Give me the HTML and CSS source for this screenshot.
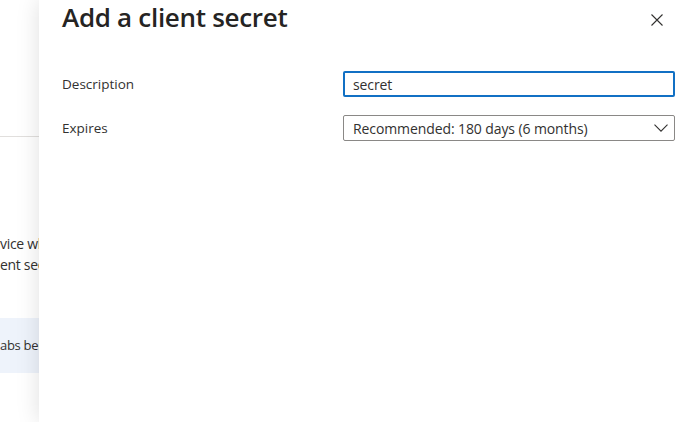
FILE: index.html
```html
<!DOCTYPE html>
<html lang="en">
<head>
<meta charset="utf-8">
<title>Add a client secret</title>
<link rel="stylesheet" href="styles.css">
</head>
<body>
<div class="page">
  <div class="bg">
    <div class="bg-top"></div>
    <div class="bg-rule"></div>
    <div class="bg-text">
      <p class="bg-line">vice when requesting a token. Also can be referred to as application password.</p>
      <p class="bg-line">ent secrets for this application.</p>
    </div>
    <div class="bg-info"><span class="bg-line">abs below to manage your credentials.</span></div>
  </div>

  <aside class="panel" role="dialog" aria-label="Add a client secret">
    <header class="panel-head">
      <h1 class="panel-title">Add a client secret</h1>
      <button class="close" aria-label="Close">
        <svg width="12" height="12" viewBox="0 0 12 12"><path d="M0.5 0.5 L11.5 11.5 M11.5 0.5 L0.5 11.5" stroke="#323130" stroke-width="1.1" fill="none"/></svg>
      </button>
    </header>
    <div class="form">
      <label class="label" for="desc">Description</label>
      <div class="input"><span class="value" id="desc">secret</span></div>
      <span class="label">Expires</span>
      <div class="select">
        <span class="value">Recommended: 180 days (6 months)</span>
        <svg class="chev" width="14" height="8" viewBox="0 0 14 8"><path d="M0.5 0.7 L7 7.2 L13.5 0.7" stroke="#323130" stroke-width="1.1" fill="none"/></svg>
      </div>
    </div>
  </aside>
</div>
</body>
</html>
```
FILE: styles.css
```css
* { box-sizing: border-box; }
html, body { margin: 0; padding: 0; }
body {
  font-family: "Open Sans", "Noto Sans", sans-serif;
  color: #323130;
  background: #fff;
  width: 694px;
  height: 422px;
  overflow: hidden;
}
.page {
  position: relative;
  width: 694px;
  height: 422px;
  overflow: hidden;
}
.bg {
  width: 694px;
  height: 422px;
  display: flex;
  flex-direction: column;
}
.bg-top { height: 136px; }
.bg-rule { height: 1px; background: #e1dfdd; }
.bg-text { margin-top: 96px; }
.bg-line {
  margin: 0;
  font-size: 14px;
  line-height: 21px;
  letter-spacing: -0.3px;
  white-space: nowrap;
  color: #323130;
}
.bg-info {
  margin-top: 43px;
  height: 55px;
  background: #eef3fb;
  display: flex;
  align-items: center;
}
.bg-info .bg-line { font-size: 13px; }

.panel {
  position: absolute;
  left: 39px;
  top: 0;
  width: 655px;
  height: 422px;
  background: #fff;
  box-shadow: 0 0 22px rgba(0, 0, 0, 0.13);
  padding: 0 19px 0 23px;
}
.panel-head {
  display: flex;
  align-items: flex-start;
  justify-content: space-between;
}
.panel-title {
  margin: 0;
  font-size: 26px;
  line-height: 35px;
  font-weight: 600;
  letter-spacing: -0.3px;
  color: #252423;
}
.close {
  border: 0;
  background: none;
  padding: 0;
  margin: 14px 12px 0 0;
  width: 12px;
  height: 12px;
  display: flex;
}
.form {
  margin-top: 36px;
  display: grid;
  grid-template-columns: 1fr 332px;
  grid-auto-rows: 26px;
  row-gap: 18px;
  align-items: center;
}
.label {
  font-size: 13.5px;
  color: #323130;
}
.input, .select {
  height: 26px;
  display: flex;
  align-items: center;
  font-size: 14px;
  letter-spacing: -0.1px;
  color: #323130;
  border-radius: 2px;
}
.input {
  border: 2px solid #1170c4;
  padding-left: 8px;
}
.select {
  border: 1px solid #8a8886;
  padding: 0 6px 0 9px;
  justify-content: space-between;
}
.chev { display: block; }
```
